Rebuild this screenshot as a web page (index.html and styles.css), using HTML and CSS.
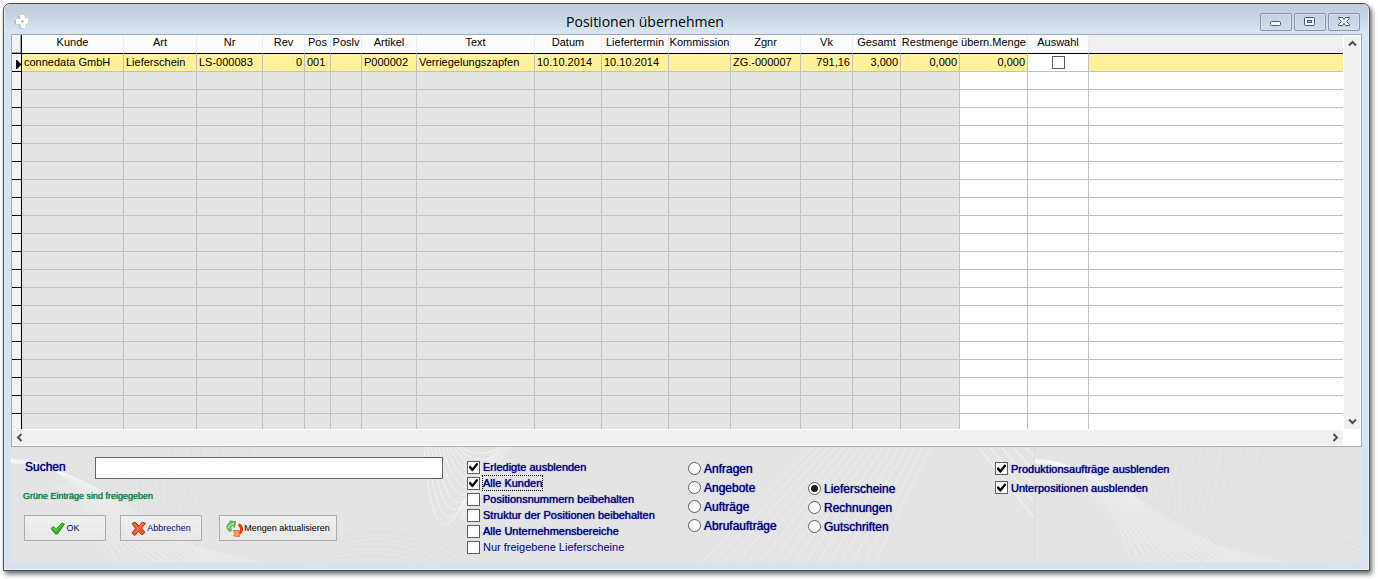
FILE: index.html
```html
<!DOCTYPE html>
<html lang="de">
<head>
<meta charset="utf-8">
<title>Positionen übernehmen</title>
<link rel="stylesheet" href="styles.css">
</head>
<body>
<main class="window">
  <header class="titlebar">
    <svg class="app-icon" width="16" height="16" viewBox="0 0 16 16" aria-hidden="true">
      <path d="M4 2h4v3L5 6zM0 6h3v4l-2 1zM5 10l3 1v4l-3-1z" fill="#a9bccd"/>
      <path d="M6 1h4l1 4 3-1v5l-3 1v4H7l-1-4-4 0V5h4z" fill="#fff"/>
      <path d="M3 10.500h3l1 4h3" fill="none" stroke="#a4d4f2"/>
      <circle cx="8.500" cy="7.500" r="1.300" fill="#f39a55"/>
    </svg>
    <h1 class="title">Positionen übernehmen</h1>
    <div class="window-buttons">
      <button class="window-button" type="button" aria-label="Minimieren"><svg width="16" height="14" viewBox="0 0 16 14"><rect x="2.500" y="6.500" width="10" height="4" rx="1" fill="#f5f6f7" stroke="#4f5769"/></svg></button>
      <button class="window-button" type="button" aria-label="Maximieren"><svg width="16" height="14" viewBox="0 0 16 14"><rect x="2.500" y="2.500" width="10" height="8" rx="1" fill="#f5f6f7" stroke="#4f5769"/><rect x="5.500" y="5.500" width="4" height="2" fill="#b9c6d8" stroke="#4f5769"/></svg></button>
      <button class="window-button" type="button" aria-label="Schließen"><svg width="16" height="14" viewBox="0 0 16 14"><path d="M2.500 2.500h4L8 4.500l1.500-2h4v1L10.500 6.500l3 3v1h-4L8 8.500l-1.500 2h-4v-1l3-3-3-3z" fill="#f5f6f7" stroke="#4f5769"/></svg></button>
    </div>
  </header>

  <section class="grid-frame">
    <table class="grid">
      <colgroup>
        <col class="w-sel"><col class="w-kunde"><col class="w-art"><col class="w-nr"><col class="w-rev"><col class="w-pos"><col class="w-poslv"><col class="w-artikel"><col class="w-text"><col class="w-datum"><col class="w-datum"><col class="w-kommission"><col class="w-zgnr"><col class="w-vk"><col class="w-gesamt"><col class="w-rest"><col class="w-menge"><col class="w-auswahl"><col>
      </colgroup>
      <thead>
        <tr><td class="sel"></td><th>Kunde</th><th>Art</th><th>Nr</th><th>Rev</th><th>Pos</th><th>Poslv</th><th>Artikel</th><th>Text</th><th>Datum</th><th>Liefertermin</th><th>Kommission</th><th>Zgnr</th><th>Vk</th><th>Gesamt</th><th>Restmenge</th><th>übern.Menge</th><th>Auswahl</th><td class="filler"></td></tr>
      </thead>
      <tbody id="rows">
        <tr class="current"><td class="sel"><svg class="pointer" width="5" height="9" viewBox="0 0 5 9"><path d="M0 0h1l4 4v1L1 9H0z"/></svg></td><td>connedata GmbH</td><td>Lieferschein</td><td>LS-000083</td><td class="num">0</td><td>001</td><td></td><td>P000002</td><td>Verriegelungszapfen</td><td>10.10.2014</td><td>10.10.2014</td><td></td><td>ZG.-000007</td><td class="num">791,16</td><td class="num">3,000</td><td class="num">0,000</td><td class="num">0,000</td><td class="pick"><input class="check" type="checkbox" aria-label="Auswahl"></td><td class="filler"></td></tr>
      </tbody>
    </table>
    <div class="scroll-v">
      <svg width="9" height="7" viewBox="0 0 9 7"><path d="M1 5.500l3.500-3.500L8 5.500"/></svg>
      <svg width="9" height="7" viewBox="0 0 9 7"><path d="M1 1.500L4.500 5 8 1.500"/></svg>
    </div>
    <div class="scroll-h">
      <svg width="7" height="9" viewBox="0 0 7 9"><path d="M5.500 1L2 4.500 5.500 8"/></svg>
      <svg width="7" height="9" viewBox="0 0 7 9"><path d="M1.500 1L5 4.500 1.500 8"/></svg>
    </div>
  </section>

  <form class="footer">
    <svg class="waves" aria-hidden="true">
      <defs><g id="wave-tile"></g></defs>
      <use href="#wave-tile"/>
      <use href="#wave-tile" x="1023"/>
      <path class="tile-seam" d="M1023.500 0v116"/>
    </svg>
    <div class="search-panel">
      <div class="search-row">
        <label class="search-label" for="search">Suchen</label>
        <input class="search-input" id="search" type="text">
      </div>
      <p class="hint">Grüne Einträge sind freigegeben</p>
      <div class="actions">
        <button class="action" type="button"><svg width="15" height="14" viewBox="0 0 15 14"><path d="M1 7.500L3.500 5.500 6 8.500 12 2l2.500 1L7.500 13h-2z" fill="#35b11f" stroke="#259416"/><path d="M2.500 7.500l1-.5 2.500 3L12.500 3" fill="none" stroke="#6fd653"/></svg>OK</button>
        <button class="action action-cancel" type="button"><svg width="15" height="15" viewBox="0 0 15 15"><path d="M1 2.500L4 1l4 4 3.500-4 3 1.500-4 4.500 3.500 4.500-3 2.500-3.500-4L4 14.500 1 12l3.500-4.500z" fill="#f4502c" stroke="#cf2c14"/><path d="M3 3l4 4M12 2.500L3.500 12" stroke="#ff8a62" fill="none"/></svg>Abbrechen</button>
        <button class="action action-refresh" type="button"><svg width="17" height="17" viewBox="0 0 17 17"><path d="M3.500 11.500C-.5 8 .5 3.500 4.500 3L3.500 1 9.500 1.500 8.500 7.500 7 5.500C4.500 6 4.500 8 5.500 10.500z" fill="#6ccc55" stroke="#4aa83c"/><path d="M2.500 8c0-2 1-3 3-3.500l2-1" stroke="#c6f0b4" fill="none"/><path d="M12.500 4.500c4 2 4 7 .5 9" fill="none" stroke="#e5351b" stroke-width="3"/><path d="M7.500 10.500l5.500 0 .5 6-6-.5 1.500-1.500z" fill="#ff9a6a" stroke="#ee6a40"/></svg>Mengen aktualisieren</button>
      </div>
    </div>
    <div class="options checks">
      <label class="option"><input class="check" type="checkbox" checked><span>Erledigte ausblenden</span></label>
      <label class="option"><input class="check" type="checkbox" checked><span class="focused">Alle Kunden</span></label>
      <label class="option"><input class="check" type="checkbox"><span>Positionsnummern beibehalten</span></label>
      <label class="option"><input class="check" type="checkbox"><span>Struktur der Positionen beibehalten</span></label>
      <label class="option"><input class="check" type="checkbox"><span>Alle Unternehmensbereiche</span></label>
      <label class="option option-light"><input class="check" type="checkbox"><span>Nur freigebene Lieferscheine</span></label>
    </div>
    <div class="options radios">
      <label class="option"><input class="radio" type="radio" name="belegart"><span>Anfragen</span></label>
      <label class="option"><input class="radio" type="radio" name="belegart"><span>Angebote</span></label>
      <label class="option"><input class="radio" type="radio" name="belegart"><span>Aufträge</span></label>
      <label class="option"><input class="radio" type="radio" name="belegart"><span>Abrufaufträge</span></label>
    </div>
    <div class="options radios radios-lower">
      <label class="option"><input class="radio" type="radio" name="belegart" checked><span>Lieferscheine</span></label>
      <label class="option"><input class="radio" type="radio" name="belegart"><span>Rechnungen</span></label>
      <label class="option"><input class="radio" type="radio" name="belegart"><span>Gutschriften</span></label>
    </div>
    <div class="options filters">
      <label class="option"><input class="check" type="checkbox" checked><span>Produktionsaufträge ausblenden</span></label>
      <label class="option"><input class="check" type="checkbox" checked><span>Unterpositionen ausblenden</span></label>
    </div>
  </form>
</main>
<script src="app.js"></script>
</body>
</html>
```
FILE: styles.css
```css
* { box-sizing: border-box; }

body {
  margin: 0;
  padding: 3px 8px 8px 3px;
  background: #fff;
  color: #000;
  font: 11px/14px "Liberation Sans", Arial, sans-serif;
}

.window {
  border: 1px solid #4b4d50;
  border-radius: 7px 7px 0 0;
  padding: 0 7px 7px;
  background: #d6e4f1;
  box-shadow: inset 0 0 0 1px #e9f1f8, 2px 3px 5px rgba(0, 0, 0, 0.6);
}

.titlebar {
  display: flex;
  align-items: center;
  height: 30px;
  margin: 0 -6px;
  padding: 6px 8px 0 9px;
  border-radius: 6px 6px 0 0;
  background: linear-gradient(#bfccda, #c3d0de 30%, #d6e4f1 90%);
}

.app-icon { flex: none; }

.title {
  flex: 1;
  margin: 0;
  text-align: center;
  font: 14px/20px "Open Sans", "Noto Sans", sans-serif;
}

.window-buttons { display: flex; gap: 2px; }

.window-button {
  display: flex;
  align-items: center;
  justify-content: center;
  width: 32px;
  height: 18px;
  padding: 0;
  border: 1px solid #8595ad;
  border-radius: 2px;
  background: linear-gradient(#c4d1df, #cfdcea);
  box-shadow: inset 0 0 0 1px #d5e0eb;
}

.grid-frame {
  display: grid;
  grid-template-columns: 1fr 18px;
  border: 1px solid #a7aab3;
  background: #fff;
}

.grid {
  width: 100%;
  table-layout: fixed;
  border-collapse: separate;
  border-spacing: 0;
}

.w-sel { width: 10px; }
.w-kunde { width: 102px; }
.w-art { width: 73px; }
.w-nr { width: 66px; }
.w-rev { width: 42px; }
.w-pos { width: 26px; }
.w-poslv { width: 31px; }
.w-artikel { width: 55px; }
.w-text { width: 118px; }
.w-datum { width: 67px; }
.w-kommission { width: 62px; }
.w-zgnr { width: 70px; }
.w-vk { width: 52px; }
.w-gesamt { width: 48px; }
.w-rest { width: 59px; }
.w-menge { width: 68px; }
.w-auswahl { width: 61px; }

.grid th,
.grid td {
  height: 18px;
  padding: 0 2px 2px;
  border-right: 1px solid #c0c0c0;
  border-bottom: 1px solid #c0c0c0;
  white-space: nowrap;
  text-align: left;
  font-weight: normal;
}

.grid td { background: #e4e4e4; }

.grid th {
  height: 19px;
  padding: 0 0 4px;
  border-right-color: #e3eefb;
  border-bottom-color: #000;
  background: #fcfcfc;
  text-align: center;
}

.grid thead td {
  border-bottom-color: #000;
  background: #f0f0f0;
}

.grid td:nth-child(17),
.grid td:nth-child(18),
.grid tbody .filler { background: #fff; }

.grid .filler { border-right: 0; }
.grid .current td { background: #fff09a; }
.grid .current .pick { padding: 0; background: #fff; text-align: center; }
.grid td.num { text-align: right; }

.grid td.sel,
.grid .current .sel {
  padding: 0;
  border-color: #000;
  background: #f3f3f3;
}

.grid thead .sel { box-shadow: inset -1px -1px #a0a0a0; }
.grid .partial td { height: 15px; border-bottom: 0; }

.pointer { display: block; margin: 4px 0 0 4px; }
.pick .check { display: block; margin: 0 auto; }

.scroll-v,
.scroll-h {
  display: flex;
  justify-content: space-between;
  align-items: center;
  background: #f0f0f0;
  border: 1px solid #fff;
}

.scroll-v { flex-direction: column; padding: 4px 0; border-bottom: 0; }
.scroll-h { height: 17px; padding: 0 4px; border-width: 1px 0; }

.scroll-v path,
.scroll-h path { fill: none; stroke: #505050; stroke-width: 2; }

.footer {
  position: relative;
  display: grid;
  grid-template-columns: 455px 221px 120px 187px 1fr;
  min-height: 116px;
  padding-left: 1px;
  overflow: hidden;
  background: #e4e4e4;
  color: #000080;
}

.waves {
  position: absolute;
  inset: 0;
  width: 100%;
  height: 100%;
}

.tile-seam { stroke: #dcdcdc; }

.search-panel,
.options { position: relative; }

.search-panel { padding: 10px 24px 0 12px; }
.search-row { display: flex; align-items: center; }

.search-label {
  width: 71px;
  padding: 0 0 2px 1px;
  font-size: 12px;
  text-shadow: 0 0 1px #000080;
}

.search-input {
  flex: 1;
  height: 22px;
  padding: 0 3px;
  border: 1px solid #646464;
  background: #fff;
  font: inherit;
}

.hint {
  margin: 10px 0 12px -1px;
  color: #008040;
  font-size: 9px;
  text-shadow: 0 0 1px #008040;
}

.actions { display: flex; }

.action {
  display: flex;
  align-items: center;
  justify-content: center;
  width: 82px;
  height: 26px;
  padding: 0;
  border: 1px solid #acacac;
  background: linear-gradient(#f0f0f0, #e7e7e7);
  color: #000080;
  font: 9px/12px "Liberation Sans", Arial, sans-serif;
  white-space: nowrap;
}

.action svg { margin-right: 1px; }
.action-cancel { margin-left: 14px; }
.action-refresh { width: 118px; margin-left: 17px; color: #000; }

.options {
  display: flex;
  flex-direction: column;
  align-items: flex-start;
}

.option {
  display: flex;
  align-items: center;
  gap: 3px;
  height: 16px;
  white-space: nowrap;
  text-shadow: 0 0 1px #000080;
}

.option-light { text-shadow: none; }
.checks { padding-top: 12px; }
.radios { padding-top: 12px; font-size: 12px; }
.radios-lower { padding-top: 32px; }
.filters { padding-top: 12px; }
.radios .option,
.filters .option { height: 19px; }

.focused { outline: 1px dotted #000; }

.check,
.radio {
  appearance: none;
  flex: none;
  display: grid;
  place-items: center;
  width: 13px;
  height: 13px;
  margin: 0;
  border: 1px solid #5c5c5c;
  background: #fff;
}

.radio { border-radius: 50%; }

.check:checked::before {
  content: "";
  width: 9px;
  height: 9px;
  background: #000;
  clip-path: polygon(0 45%, 14% 34%, 38% 60%, 86% 4%, 100% 14%, 100% 24%, 42% 96%, 34% 96%, 0 62%);
}

.radio:checked::before {
  content: "";
  width: 7px;
  height: 7px;
  border-radius: 50%;
  background: #1c1c1c;
}
```
FILE: app.js
```javascript
// Empty grid rows below the current record; the last one is cut by the scrollbar.
const EMPTY_ROWS = 20;
const COLUMNS = 19;
const body = document.getElementById("rows");

for (let i = 0; i < EMPTY_ROWS; i++) {
  const row = body.insertRow();
  if (i === EMPTY_ROWS - 1) row.className = "partial";
  for (let c = 0; c < COLUMNS; c++) {
    const cell = row.insertCell();
    if (c === 0) cell.className = "sel";
    if (c === COLUMNS - 1) cell.className = "filler";
  }
}

// Decorative line fans: each blends from one cubic curve to another.
const fans = [
  { from: [0, 12, 60, 14, 80, 60, 98, 116], to: [0, 16, 80, 20, 120, 70, 215, 116], count: 16, color: "#fff", opacity: 0.25 },
  { from: [40, 34, 70, 60, 90, 90, 110, 116], to: [90, 40, 130, 80, 170, 100, 250, 116], count: 16, color: "#fff", opacity: 0.25 },
  { from: [50, 0, 90, 20, 110, 60, 110, 70], to: [240, 0, 225, 50, 200, 90, 165, 116], count: 20, color: "#d8d8d8", opacity: 0.3 },
  { from: [413, 0, 416, 40, 425, 110, 450, 60], to: [450, 0, 460, 8, 480, 8, 490, 0], count: 11, color: "#fff", opacity: 0.5 },
  { from: [486, 0, 475, 18, 465, 30, 450, 60], to: [500, 0, 480, 24, 465, 45, 450, 74], count: 6, color: "#fff", opacity: 0.4 },
  { from: [802, 0, 765, 35, 730, 75, 690, 116], to: [920, 0, 900, 40, 880, 80, 865, 116], count: 16, color: "#fff", opacity: 0.35 },
  { from: [967, 0, 985, 22, 1000, 42, 1023, 71], to: [1014, 0, 1016, 3, 1020, 6, 1023, 9], count: 5, color: "#fff", opacity: 0.7 },
  { from: [280, 116, 320, 80, 400, 70, 460, 116], to: [310, 116, 340, 106, 370, 106, 410, 116], count: 6, color: "#dadada", opacity: 0.5 }
];

const tile = document.getElementById("wave-tile");
for (const fan of fans) {
  for (let i = 0; i < fan.count; i++) {
    const t = i / (fan.count - 1);
    const p = fan.from.map((v, k) => v + (fan.to[k] - v) * t);
    const path = document.createElementNS("http://www.w3.org/2000/svg", "path");
    path.setAttribute("d", `M${p[0]} ${p[1]}C${p.slice(2).join(" ")}`);
    path.setAttribute("fill", "none");
    path.setAttribute("stroke", fan.color);
    path.setAttribute("stroke-opacity", fan.opacity);
    tile.appendChild(path);
  }
}
```
